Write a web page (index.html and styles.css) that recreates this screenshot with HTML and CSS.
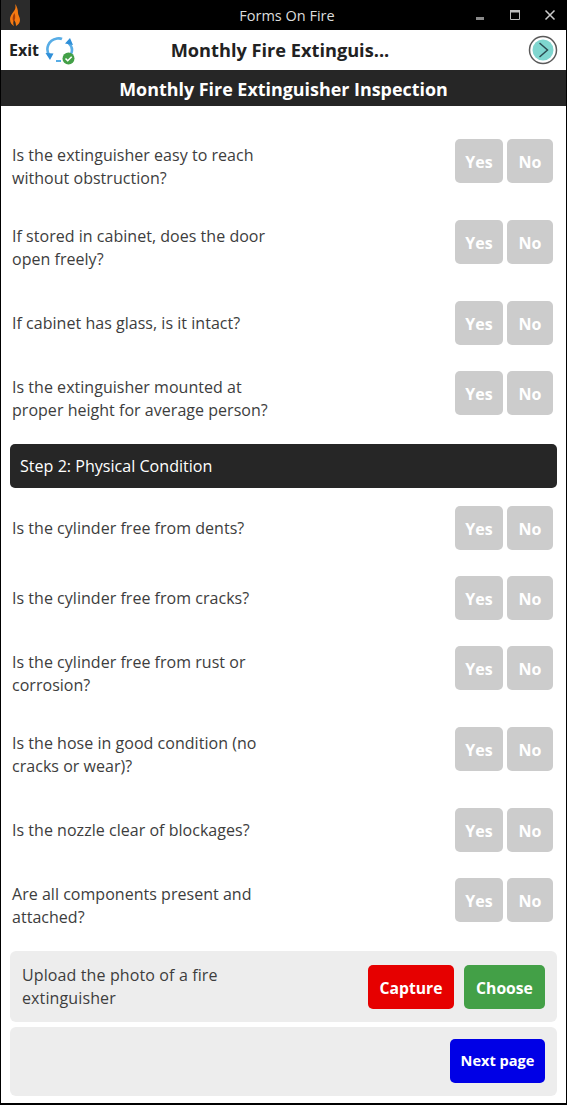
FILE: index.html
```html
<!DOCTYPE html>
<html lang="en">
<head>
<meta charset="utf-8">
<title>Forms On Fire</title>
<link rel="stylesheet" href="styles.css">
</head>
<body>
<div class="window">
  <div class="titlebar">
    <div class="app-icon">
      <svg width="30" height="30" viewBox="0 0 30 30"><path d="M15 4c1 3 .5 5-1 7-2 3-4 5-4 8 0 4 2 6 4 7-1-2-1-4 0-6 1 1 2 3 2 6 2-1 4-3 4-6 0-3-2-5-2-7 0-3-1-7-3-9z" fill="#f47a12"/><path d="M14.500 13c-2 3-2.500 6-1 9 1.500-2 2.500-5 1-9z" fill="#a33c08"/></svg>
    </div>
    <div class="title">Forms On Fire</div>
    <div class="win-controls">
      <svg width="12" height="12" viewBox="0 0 12 12"><rect x="2" y="8" width="8" height="3" fill="#8a8a8a"/></svg>
      <svg width="12" height="12" viewBox="0 0 12 12"><path d="M1.500 2.500h9v8h-9z" fill="none" stroke="#bbb"/><rect x="1" y="1" width="10" height="2.500" fill="#bbb"/></svg>
      <svg width="12" height="12" viewBox="0 0 12 12"><path d="M1.500 1.500l9 9M10.500 1.500l-9 9" stroke="#ccc" stroke-width="1.500"/></svg>
    </div>
  </div>
  <div class="toolbar">
    <div class="tool-left">
      <span class="exit">Exit</span>
      <svg class="sync" width="31" height="30" viewBox="0 0 31 30">
        <path d="M4.500 21C0 14 3 5 12 3.500c2-.3 4 0 5 .5M23 7c4 4 5 8 3 12" fill="none" stroke="#58ade6" stroke-width="2.600"/>
        <path d="M.5 18l8 .500-3.500 6.500zM28 10l-8-1.500 5-5.500z" fill="#2f8fd8"/>
        <rect x="11" y="25" width="5" height="2" fill="#58ade6"/>
        <circle cx="23.500" cy="23.500" r="6" fill="#43a047"/>
        <path d="M20.500 23.500l2.200 2.200 4-4" fill="none" stroke="#fff" stroke-width="1.600"/>
      </svg>
    </div>
    <div class="tool-title">Monthly Fire Extinguis...</div>
    <svg class="next-circle" width="30" height="30" viewBox="0 0 30 30">
      <circle cx="15" cy="15" r="13.500" fill="none" stroke="#5a5a5a" stroke-width="1.500"/>
      <circle cx="15" cy="15" r="10.500" fill="#7fd6cf"/>
      <path d="M11.500 8l8 7-8 7" fill="none" stroke="#2c4a50" stroke-width="1.500"/>
    </svg>
  </div>
  <div class="form-title"><span class="nudge">Monthly Fire Extinguisher Inspection</span></div>
  <div class="content">
    <div class="row"><div class="q">Is the extinguisher easy to reach without obstruction?</div><div class="btns"><span class="btn yes">Yes</span><span class="btn no">No</span></div></div>
    <div class="row"><div class="q">If stored in cabinet, does the door open freely?</div><div class="btns"><span class="btn yes">Yes</span><span class="btn no">No</span></div></div>
    <div class="row"><div class="q">If cabinet has glass, is it intact?</div><div class="btns"><span class="btn yes">Yes</span><span class="btn no">No</span></div></div>
    <div class="row"><div class="q">Is the extinguisher mounted at proper height for average person?</div><div class="btns"><span class="btn yes">Yes</span><span class="btn no">No</span></div></div>
    <div class="section">Step 2: Physical Condition</div>
    <div class="row"><div class="q">Is the cylinder free from dents?</div><div class="btns"><span class="btn yes">Yes</span><span class="btn no">No</span></div></div>
    <div class="row"><div class="q">Is the cylinder free from cracks?</div><div class="btns"><span class="btn yes">Yes</span><span class="btn no">No</span></div></div>
    <div class="row"><div class="q">Is the cylinder free from rust or corrosion?</div><div class="btns"><span class="btn yes">Yes</span><span class="btn no">No</span></div></div>
    <div class="row"><div class="q">Is the hose in good condition (no cracks or wear)?</div><div class="btns"><span class="btn yes">Yes</span><span class="btn no">No</span></div></div>
    <div class="row"><div class="q">Is the nozzle clear of blockages?</div><div class="btns"><span class="btn yes">Yes</span><span class="btn no">No</span></div></div>
    <div class="row"><div class="q">Are all components present and attached?</div><div class="btns"><span class="btn yes">Yes</span><span class="btn no">No</span></div></div>
    <div class="panel upload">
      <div class="upload-label">Upload the photo of a fire extinguisher</div>
      <div class="upload-btns"><span class="action capture">Capture</span><span class="action choose">Choose</span></div>
    </div>
    <div class="panel pager"><span class="action nextpage">Next page</span></div>
  </div>
</div>
</body>
</html>
```
FILE: styles.css
```css
* { box-sizing: border-box; }
html, body { margin: 0; padding: 0; background: #fff; }
body { font-family: "Open Sans", "Noto Sans", sans-serif; color: #333; }
.window { width: 567px; height: 1105px; border: solid #000; border-width: 0 1px 2px 1px; overflow: hidden; background: #fff; }
.titlebar { height: 30px; margin: 0 -1px; background: #000; display: flex; align-items: center; position: relative; }
.app-icon { width: 30px; height: 30px; background: #2b2b2b; }
.app-icon svg { display: block; }
.title { position: absolute; left: 7px; right: 0; text-align: center; color: #ddd; font-size: 14.500px; }
.win-controls { margin-left: auto; display: flex; gap: 23px; padding-right: 11px; align-items: center; }
.win-controls svg { display: block; }
.toolbar { height: 40px; display: flex; align-items: center; position: relative; padding: 0 8px; }
.tool-left { display: flex; align-items: center; gap: 6px; }
.exit { font-weight: 700; font-size: 16px; color: #222; }
.sync { display: block; }
.tool-title { position: absolute; left: 0; right: 7px; text-align: center; font-weight: 700; font-size: 18.200px; color: #222; }
.next-circle { margin-left: auto; display: block; }
.form-title { height: 36px; margin: 0 -1px; background: #262626; color: #fff; font-weight: 700; font-size: 17.900px; display: flex; align-items: center; justify-content: center; }
.nudge { padding-top: 2px; }
.content { padding: 20px 9px 0; }
.row { display: flex; align-items: center; justify-content: space-between; padding-left: 2px; padding-right: 4px; min-height: 70px; }
.q { width: 268px; padding: 17.500px 0; font-size: 16px; line-height: 23px; letter-spacing: 0.030px; color: #3d3d3d; }
.btns { align-self: flex-start; display: flex; gap: 4px; margin-top: 13px; }
.btn { height: 44px; padding-top: 2px; border-radius: 5px; background: #ccc; color: #fff; font-weight: 700; font-size: 16px; display: flex; align-items: center; justify-content: center; }
.yes { width: 48px; }
.no { width: 46px; }
.section { height: 44px; margin: 5px 0; padding-left: 10px; background: #262626; color: #fff; border-radius: 5px; font-size: 16.100px; display: flex; align-items: center; padding-bottom: 1px; }
.panel { background: #ededed; border-radius: 6px; display: flex; align-items: center; padding: 0 12px; }
.upload { height: 71px; margin-top: 5px; justify-content: space-between; }
.upload-label { width: 230px; font-size: 16px; line-height: 23px; letter-spacing: 0.120px; color: #3d3d3d; }
.upload-btns { display: flex; gap: 10px; }
.pager { height: 69px; margin-top: 5px; padding-bottom: 2px; justify-content: flex-end; }
.action { height: 44px; border-radius: 5px; color: #fff; font-weight: 700; font-size: 15.700px; display: flex; align-items: center; justify-content: center; }
.capture { width: 86px; background: #e60000; padding-top: 2px; }
.choose { width: 81px; background: #43a047; padding-top: 2px; }
.nextpage { width: 95px; background: #0000e6; font-size: 14.600px; padding-bottom: 1px; }
```
